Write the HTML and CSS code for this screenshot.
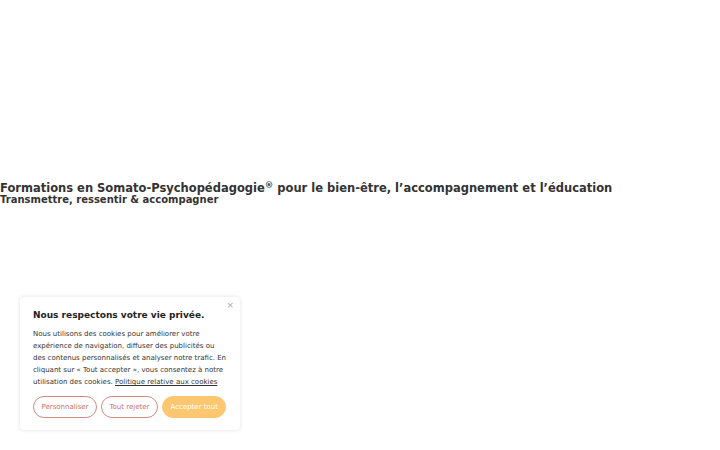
FILE: index.html
```html
<!DOCTYPE html>
<html lang="fr">
<head>
<meta charset="utf-8">
<link rel="stylesheet" href="styles.css">
</head>
<body>
<header class="hero">
  <h1 class="title">Formations en Somato-Psychopédagogie<sup>®</sup> pour le bien-être, l’accompagnement et l’éducation</h1>
  <p class="subtitle">Transmettre, ressentir &amp; accompagner</p>
</header>
<div class="cookie">
  <button class="close" aria-label="Fermer">×</button>
  <h2 class="cookie-title">Nous respectons votre vie privée.</h2>
  <p class="cookie-text">Nous utilisons des cookies pour améliorer votre expérience de navigation, diffuser des publicités ou des contenus personnalisés et analyser notre trafic. En cliquant sur « Tout accepter », vous consentez à notre utilisation des cookies. <a href="#">Politique relative aux cookies</a></p>
  <div class="actions">
    <button class="btn outline">Personnaliser</button>
    <button class="btn outline">Tout rejeter</button>
    <button class="btn filled">Accepter tout</button>
  </div>
</div>
</body>
</html>
```

FILE: styles.css
```css
html, body { margin: 0; padding: 0; background: #fff; }
body { font-family: "DejaVu Sans", sans-serif; color: #333; width: 720px; height: 450px; overflow: hidden; position: relative; }
.hero { padding-top: 182px; }
.title { margin: 0; font-size: 11.5px; font-weight: bold; line-height: 12px; color: #333; }
.title sup { font-size: 8.5px; line-height: 0; vertical-align: 4.5px; }
.subtitle { margin: 0; font-size: 10px; font-weight: bold; line-height: 11px; color: #333; }
.cookie {
  position: absolute; left: 20px; top: 297px; width: 220px; box-sizing: border-box;
  padding: 12px 13px 12px 13px; background: #fff;
  box-shadow: 0 0 4px rgba(0,0,0,0.12); border-radius: 4px;
}
.close { position: absolute; right: 6px; top: 3px; border: 0; background: none; color: #aaa; font-size: 9px; padding: 0; cursor: pointer; font-family: inherit; }
.cookie-title { margin: 0 0 6px; font-size: 9px; font-weight: bold; line-height: 13px; color: #222; }
.cookie-text { margin: 0 0 8px; font-size: 7px; line-height: 12px; color: #333; }
.cookie-text a { color: #333; text-decoration: underline; }
.actions { display: flex; gap: 4px; }
.btn { font-family: inherit; font-size: 7px; height: 22px; border-radius: 11px; padding: 0 7.5px; cursor: pointer; white-space: nowrap; }
.outline { background: #fff; border: 1px solid #cf8b82; color: #c96f62; }
.filled { background: #fdc670; border: 1px solid #fdc670; color: #fff; }
```
